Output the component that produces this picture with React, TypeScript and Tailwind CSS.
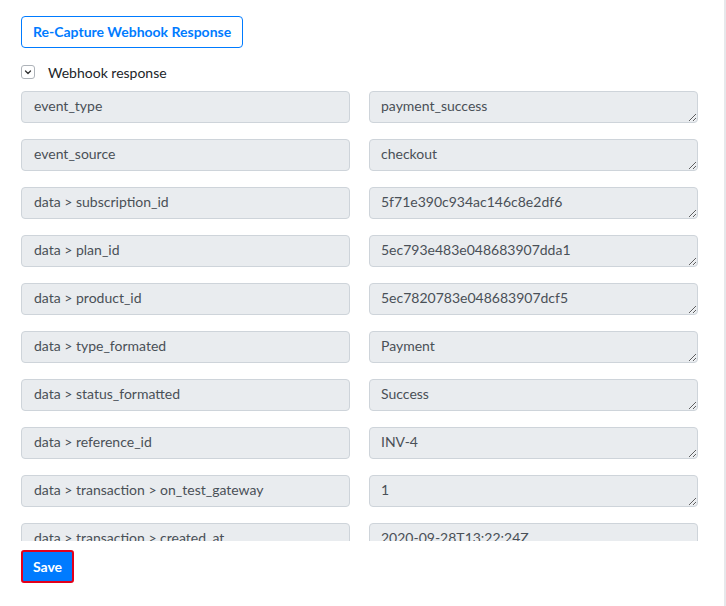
import React from 'react';

const rows: [string, string][] = [
  ['event_type', 'payment_success'],
  ['event_source', 'checkout'],
  ['data > subscription_id', '5f71e390c934ac146c8e2df6'],
  ['data > plan_id', '5ec793e483e048683907dda1'],
  ['data > product_id', '5ec7820783e048683907dcf5'],
  ['data > type_formated', 'Payment'],
  ['data > status_formatted', 'Success'],
  ['data > reference_id', 'INV-4'],
  ['data > transaction > on_test_gateway', '1'],
  ['data > transaction > created_at', '2020-09-28T13:22:24Z'],
  ['data > transaction > amount', '10'],
];

export default function App() {
  return (
    <div className="h-[606px] w-[726px] bg-white border-r-2 border-[#e6e8eb] font-['Lato',sans-serif] text-[14px] overflow-hidden">
      <div className="pl-[21px] pr-[26px] pt-[16px]">
        <button className="h-8 px-[11px] rounded border border-[#007bff] text-[#007bff] font-bold text-[14px] leading-none bg-white">
          Re-Capture Webhook Response
        </button>

        <div className="flex items-center gap-[13px] mt-[17px] h-[14px]">
          <span className="w-[14px] h-[14px] rounded-[3px] border border-[#aeb3b9] flex items-center justify-center">
            <svg width="8" height="8" viewBox="0 0 8 8" fill="none">
              <path d="M1.5 3l2.5 2.5L6.5 3" stroke="#333" strokeWidth="1.3" strokeLinecap="round" strokeLinejoin="round" />
            </svg>
          </span>
          <span className="text-[#212529] text-[14px]">Webhook response</span>
        </div>

        <div className="mt-[12px] h-[450px] overflow-hidden">
          <div className="grid grid-cols-2 gap-x-[19px] gap-y-[16px]">
            {rows.map(([label, value]) => (
              <React.Fragment key={label}>
                <input
                  readOnly
                  value={label}
                  className="h-8 w-full rounded border border-[#ced4da] bg-[#e9ecef] px-3 pb-[3px] text-[#495057] text-[14px] outline-none"
                />
                <textarea
                  readOnly
                  value={value}
                  className="h-8 w-full rounded border border-[#ced4da] bg-[#e9ecef] pl-[11px] pr-3 pt-[4px] pb-[6px] leading-[20px] text-[#495057] text-[14px] outline-none overflow-hidden resize-y"
                />
              </React.Fragment>
            ))}
          </div>
        </div>

        <button className="mt-[9px] h-[33px] w-[53px] rounded-[3px] border-2 border-[#e3001b] bg-[#007bff] text-white font-bold text-[14px] leading-none">
          Save
        </button>
      </div>
    </div>
  );
}
